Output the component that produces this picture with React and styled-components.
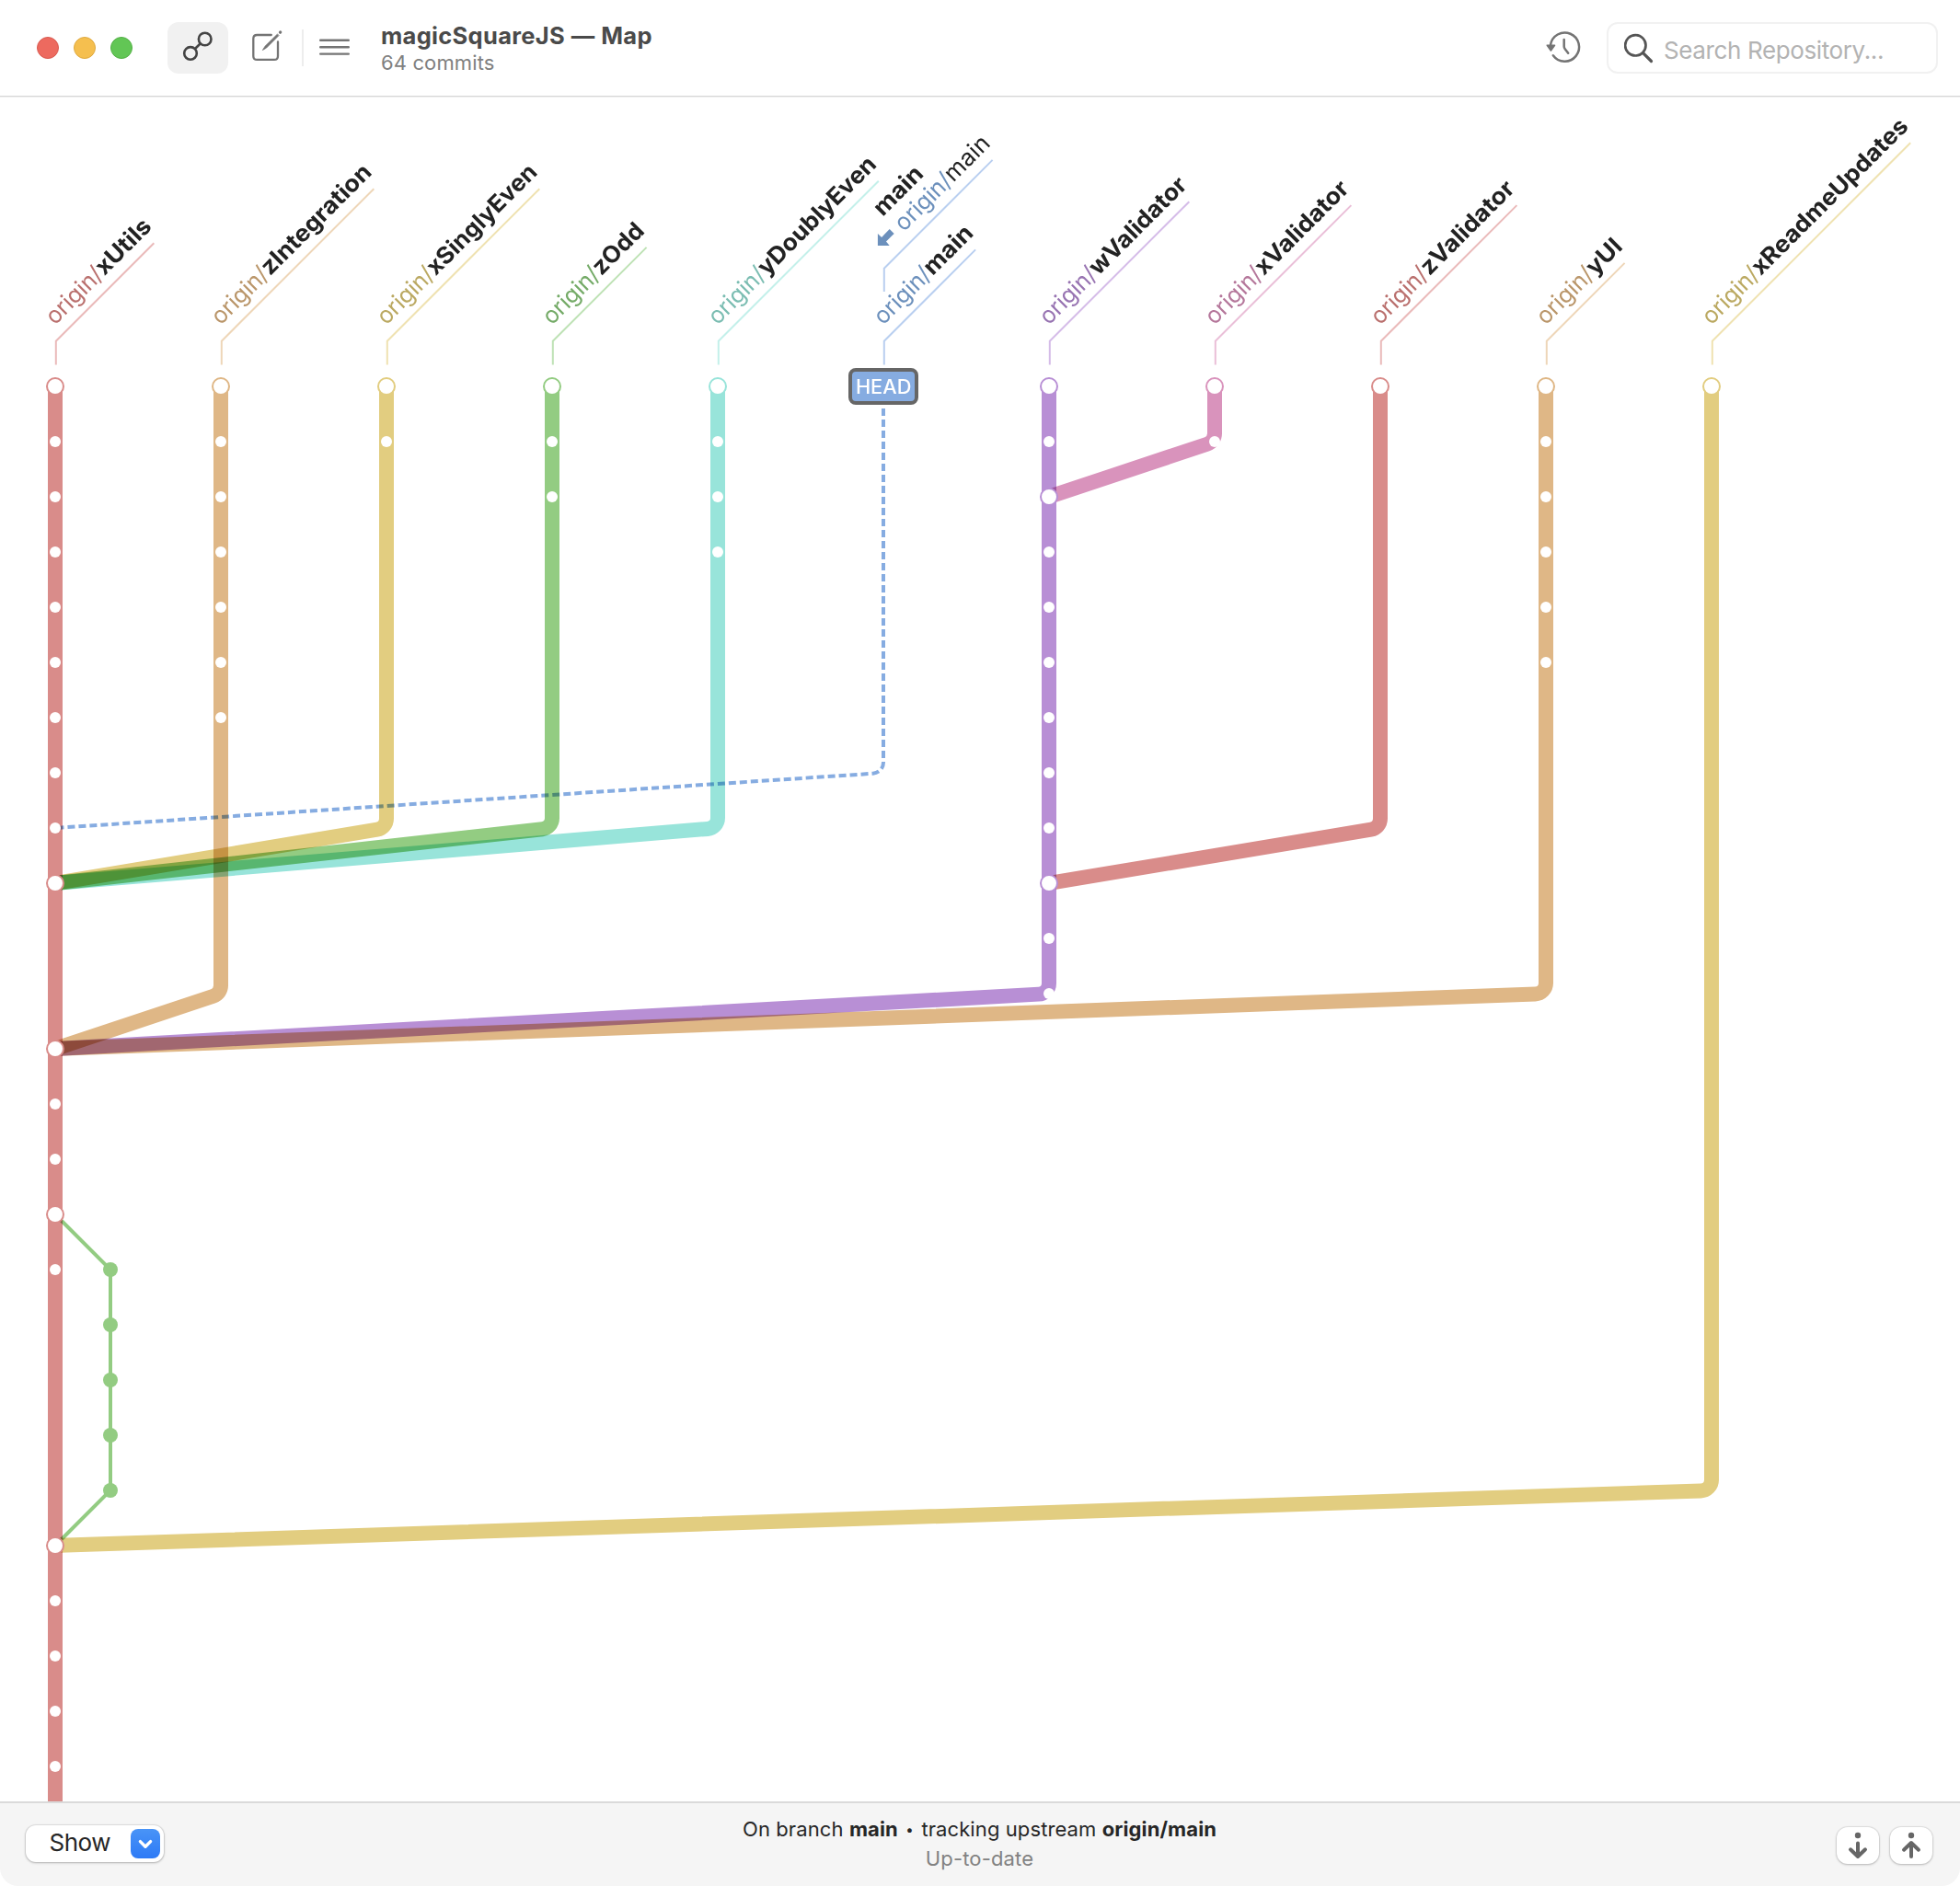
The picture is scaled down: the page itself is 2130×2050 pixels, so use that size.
import React from 'react';
import styled, { createGlobalStyle } from 'styled-components';

const GlobalStyle = createGlobalStyle`
  * { box-sizing: border-box; }
  body { margin: 0; background: #fff; }
`;

const FONT = 'Inter, "Liberation Sans", sans-serif';

const palette = {
  red: { line: '#d98c8a', text: '#ba706e', leader: '#eababa' },
  orange: { line: '#dfb786', text: '#ba966a', leader: '#eed6b8' },
  yellow: { line: '#e2cd80', text: '#bba962', leader: '#efe2b1' },
  green: { line: '#93cc82', text: '#75ab68', leader: '#bee2b5' },
  teal: { line: '#98e4da', text: '#7bbdb2', leader: '#c3f0ea' },
  blue: { line: '#86ace1', text: '#6c90bc', leader: '#b9cff0' },
  purple: { line: '#b88fd5', text: '#9874b2', leader: '#d5bce8' },
  pink: { line: '#d993bc', text: '#b5779b', leader: '#eabfd8' },
};

/* ---------- window chrome ---------- */

const Window = styled.div`
  width: 2130px;
  height: 2050px;
  display: flex;
  flex-direction: column;
  overflow: hidden;
  background: #fff;
  border-radius: 0 0 20px 20px;
  font-family: ${FONT};
`;

const Toolbar = styled.header`
  height: 106px;
  flex: none;
  display: flex;
  align-items: flex-start;
  padding: 24px 24px 0 40px;
  border-bottom: 1px solid #efefef;
  box-shadow: inset 0 -1px #d6d6d6;
`;

const TrafficLights = styled.div`
  display: flex;
  gap: 16px;
  height: 56px;
  align-items: center;
  margin-right: 38px;
`;

const Light = styled.span`
  width: 24px;
  height: 24px;
  border-radius: 50%;
  background: ${(p) => p.$fill};
  border: 1px solid ${(p) => p.$rim};
`;

const ToolButton = styled.button`
  width: ${(p) => p.$width || 66}px;
  height: 56px;
  padding: 0;
  border: 0;
  border-radius: 12px;
  background: ${(p) => (p.$active ? '#f1f1f1' : 'transparent')};
  color: ${(p) => (p.$active ? '#444' : '#747474')};
  display: flex;
  align-items: center;
  justify-content: center;
`;

const Divider = styled.span`
  width: 2px;
  height: 40px;
  margin: 8px 0 0 6px;
  background: #ededed;
`;

const Titles = styled.div`
  flex: 1;
  margin-left: 16px;
`;

const Title = styled.h1`
  margin: 0;
  font-size: 25.5px;
  line-height: 30px;
  font-weight: 700;
  letter-spacing: 0.3px;
  word-spacing: 0.4px;
  color: #4a4a4a;
`;

const Subtitle = styled.p`
  margin: 1px 0 0;
  font-size: 22px;
  line-height: 26px;
  letter-spacing: 0.12px;
  color: #808080;
`;

const SearchField = styled.label`
  width: 360px;
  height: 56px;
  margin-left: 13px;
  padding-left: 17px;
  border: 2px solid #f1f1f1;
  border-radius: 12px;
  display: flex;
  align-items: center;
  gap: 9px;
`;

const Placeholder = styled.span`
  padding-top: 6px;
  font-size: 26px;
  line-height: 32px;
  letter-spacing: -0.38px;
  color: #b3b3b3;
`;

const StatusBar = styled.footer`
  height: 92px;
  flex: none;
  display: grid;
  grid-template-columns: 1fr auto 1fr;
  align-items: start;
  padding: 24px 30px 0 28px;
  background: #f5f5f5;
  border-top: 2px solid #dadada;
`;

const PopUp = styled.button`
  width: 150px;
  height: 40px;
  padding: 0 4px 0 25.5px;
  border: 0;
  border-radius: 11px;
  background: #fff;
  box-shadow: 0 0 1px 1px rgba(0, 0, 0, 0.09), 0 1px 3px rgba(0, 0, 0, 0.22);
  display: flex;
  align-items: center;
  justify-content: space-between;
  font-family: ${FONT};
  font-size: 26px;
  letter-spacing: -0.5px;
  color: #262626;
`;

const PopUpLabel = styled.span`
  padding-bottom: 3px;
`;

const PopUpArrow = styled.span`
  width: 32px;
  height: 32px;
  border-radius: 8px;
  background: linear-gradient(#4994f7, #2d7af6);
  display: flex;
`;

const Status = styled.div`
  margin-top: -10px;
  padding-left: 1px;
  text-align: center;
`;

const StatusLine = styled.p`
  margin: 0;
  font-size: 22px;
  line-height: 28px;
  letter-spacing: ${(p) => (p.$muted ? 0.15 : 0.1)}px;
  color: ${(p) => (p.$muted ? '#828282' : '#262626')};
  & + & { margin-top: 4px; }
`;

const Bullet = styled.span`
  display: inline-block;
  width: 13px;
  font-size: 15px;
  line-height: 15px;
  vertical-align: 2px;
  text-align: center;
`;

const SyncButtons = styled.div`
  display: flex;
  justify-content: flex-end;
  gap: 12px;
  margin-top: 2px;
`;

const SyncButton = styled.button`
  width: 46px;
  height: 40px;
  padding: 0;
  border: 0;
  border-radius: 12px;
  background: #fff;
  color: #666;
  box-shadow: 0 0 1px 1px rgba(0, 0, 0, 0.08), 0 1px 3px rgba(0, 0, 0, 0.2);
  display: flex;
`;

const Icon = styled.svg`
  display: block;
  flex: none;
  fill: none;
  stroke: currentColor;
  stroke-width: ${(p) => p.$weight || 2.4};
  stroke-linecap: round;
  stroke-linejoin: round;
  color: ${(p) => p.$color || 'inherit'};
`;

/* ---------- commit map ---------- */

const MapCanvas = styled.svg`
  display: block;
  flex: none;
  width: 2130px;
  height: 1852px;
  background: #fff;
  isolation: isolate;
`;

const Track = styled.path`
  fill: none;
  stroke: ${(p) => palette[p.$hue].line};
  stroke-width: ${(p) => p.$weight || 16};
  stroke-dasharray: ${(p) => (p.$dashed ? '8 4' : 'none')};
  mix-blend-mode: multiply;
`;

const Stop = styled.circle`
  fill: #fff;
`;

const Junction = styled.circle`
  fill: #fff;
  stroke: ${(p) => palette[p.$hue].line};
  stroke-width: 2;
`;

const SideStop = styled.circle`
  fill: ${palette.green.line};
`;

const Leader = styled.path`
  fill: none;
  stroke: ${(p) => palette[p.$hue].leader};
  stroke-width: 2;
`;

const Remote = styled.text`
  font: 400 25.5px ${FONT};
  fill: ${(p) => palette[p.$hue].text};
`;

const Branch = styled.text`
  font: ${(p) => (p.$plain ? 400 : 700)} 25.5px ${FONT};
  fill: #222;
`;

const HeadBox = styled.rect`
  fill: ${palette.blue.line};
  stroke: #666;
  stroke-width: 4;
`;

const HeadText = styled.text`
  font: 500 21.5px ${FONT};
  fill: #fff;
`;

const row = (n) => 420 + n * 60;
const range = (a, b) => Array.from({ length: b - a + 1 }, (_, i) => a + i);

// Column lines: `knee` is the row of the bend, `into` the x,row it merges at.
const tracks = [
  { x: 60, hue: 'red', stops: [1, 2, 3, 4, 5, 6, 7, 8, 13, 14, 16, 22, 23, 24, 25], junctions: [0, 9, 12, 15, 21] },
  { x: 240, hue: 'orange', knee: 11, into: [60, 12], stops: range(1, 6), junctions: [0] },
  { x: 420, hue: 'yellow', knee: 8, into: [60, 9], stops: [1], junctions: [0] },
  { x: 600, hue: 'green', knee: 8, into: [60, 9], stops: [1, 2], junctions: [0] },
  { x: 780, hue: 'teal', knee: 8, into: [60, 9], stops: [1, 2, 3], junctions: [0] },
  { x: 960, hue: 'blue', knee: 7, into: [60, 8], stops: [], junctions: [], dashed: true },
  { x: 1140, hue: 'purple', knee: 11, into: [60, 12], stops: [1, 3, 4, 5, 6, 7, 8, 10, 11], junctions: [0, 2, 9] },
  { x: 1320, hue: 'pink', knee: 1, into: [1140, 2], stops: [1], junctions: [0] },
  { x: 1500, hue: 'red', knee: 8, into: [1140, 9], stops: [], junctions: [0] },
  { x: 1680, hue: 'orange', knee: 11, into: [60, 12], stops: range(1, 5), junctions: [0] },
  { x: 1860, hue: 'yellow', knee: 20, into: [60, 21], stops: [], junctions: [0] },
];

const labels = [
  { x: 60, hue: 'red', name: 'xUtils', run: 106.5 },
  { x: 240, hue: 'orange', name: 'zIntegration', run: 165.5 },
  { x: 420, hue: 'yellow', name: 'xSinglyEven', run: 165.5 },
  { x: 600, hue: 'green', name: 'zOdd', run: 101.8 },
  { x: 780, hue: 'teal', name: 'yDoublyEven', run: 174 },
  { x: 960, hue: 'blue', name: 'main', run: 99.3 },
  { x: 1140, hue: 'purple', name: 'wValidator', run: 151.5 },
  { x: 1320, hue: 'pink', name: 'xValidator', run: 147.6 },
  { x: 1500, hue: 'red', name: 'zValidator', run: 147.6 },
  { x: 1680, hue: 'orange', name: 'yUI', run: 84.8 },
  { x: 1860, hue: 'yellow', name: 'xReadmeUpdates', run: 215.4 },
];

const REMOTE_WIDTH = 76;

function trackPath({ x, knee, into, dashed }) {
  if (knee === undefined) return `M${x} 420V1970`;
  const ky = row(knee);
  const dx = into[0] - x;
  const dy = row(into[1]) - ky;
  const len = Math.hypot(dx, dy);
  const ux = dx / len;
  const uy = dy / len;
  const radius = 12;
  const t = radius * Math.tan(Math.acos(uy) / 2);
  const end = 5;
  return [
    `M${x} ${dashed ? 444 : 420}`,
    `V${ky - t}`,
    `A${radius} ${radius} 0 0 1 ${x + ux * t} ${ky + uy * t}`,
    `L${into[0] - ux * end} ${row(into[1]) - uy * end}`,
  ].join('');
}

function BranchLabel({ x, hue, name, run }) {
  const width = run * Math.SQRT2;
  return (
    <g>
      <Leader $hue={hue} d={`M${x + 0.8} 396.5V370.7l${run} ${-run}`} />
      <g transform={`translate(${x + 0.8} 370.7) rotate(-45)`}>
        <Remote $hue={hue} x="11" y="-12.5" textLength={REMOTE_WIDTH} lengthAdjust="spacingAndGlyphs">origin/</Remote>
        <Branch x={11 + REMOTE_WIDTH} y="-12.5" textLength={width - REMOTE_WIDTH} lengthAdjust="spacingAndGlyphs">{name}</Branch>
      </g>
    </g>
  );
}

function TrackingLabel() {
  return (
    <g>
      <Leader $hue="blue" d="M960.8 317V291.7l117.8 -117.8" />
      <g transform="translate(960.8 291.7) rotate(-45)">
        <Branch x="38.3" y="-40.5" textLength="64.5" lengthAdjust="spacingAndGlyphs">main</Branch>
        <Remote $hue="blue" x="43" y="-12.5" textLength={REMOTE_WIDTH} lengthAdjust="spacingAndGlyphs">origin/</Remote>
        <Branch $plain x="119" y="-12.5" textLength="58.5" lengthAdjust="spacingAndGlyphs">main</Branch>
      </g>
      <path
        fill={palette.blue.text}
        d="M953.9 254l4.2 3.9 8.6-8.9 5 4.9-8.7 8.7 3.7 4.4h-12.8z"
      />
    </g>
  );
}

function CommitMap() {
  return (
    <MapCanvas viewBox="0 106 2130 1852">
      {tracks.map((t) => (
        <Track key={t.x} $hue={t.hue} $dashed={t.dashed} $weight={t.dashed ? 4 : 16} d={trackPath(t)} />
      ))}
      <Track $hue="green" $weight={4} d="M65 1325L120 1380V1620L65 1675" />
      {range(16, 20).map((n) => <SideStop key={n} cx={120} cy={row(n)} r={8} />)}
      {tracks.map((t) => (
        <g key={t.x}>
          {t.stops.map((n) => <Stop key={n} cx={t.x} cy={row(n)} r={6} />)}
          {t.junctions.map((n) => <Junction key={n} $hue={t.hue} cx={t.x} cy={row(n)} r={9} />)}
        </g>
      ))}
      {labels.map((l) => <BranchLabel key={l.x} {...l} />)}
      <TrackingLabel />
      <HeadBox x="924" y="402" width="72" height="36" rx="6" />
      <HeadText x="929.9" y="428" textLength="60.5" lengthAdjust="spacingAndGlyphs">HEAD</HeadText>
    </MapCanvas>
  );
}

function SyncIcon({ up }) {
  return (
    <Icon width="46" height="40" viewBox="0 0 46 40" $weight={4}>
      <circle cx="23" cy="9" r="3.2" fill="currentColor" stroke="none" />
      <path d={up ? 'M23 32V17.5M15 24.7L23 17l8 7.7' : 'M23 17.5V32M15 24.3L23 32l8-7.7'} />
    </Icon>
  );
}

export default function App() {
  return (
    <Window>
      <GlobalStyle />
      <Toolbar>
        <TrafficLights>
          <Light $fill="#ed6a5f" $rim="#d95b51" />
          <Light $fill="#f5bf4f" $rim="#dfaa41" />
          <Light $fill="#62c655" $rim="#53b046" />
        </TrafficLights>
        <ToolButton $active aria-label="Map">
          <Icon width="66" height="56" viewBox="182 24 66 56" $weight={2.6}>
            <circle cx="222.7" cy="42.5" r="6.8" />
            <circle cx="207" cy="57.9" r="6.8" />
            <path d="M212.2 52.8l5.4-5.3" />
          </Icon>
        </ToolButton>
        <ToolButton $width={74} aria-label="Compose">
          <Icon width="74" height="56" viewBox="248 24 74 56" $weight={2.3}>
            <path d="M294.8 38h-15.5q-4 0-4 4v18.9q0 4 4 4h18.7q4 0 4-4V45.5" />
            <path d="M304.5 35.2l.2-.2" strokeWidth="3.2" />
            <path d="M301.3 37.2L288 50.3l-2.6 4.2 4.2-2.5 13.2-13.2z" fill="currentColor" strokeWidth="0.8" />
          </Icon>
        </ToolButton>
        <Divider />
        <ToolButton $width={68} aria-label="Menu">
          <Icon width="68" height="56" viewBox="330 24 68 56">
            <path d="M348.2 43.7h30.6M348.2 51.2h30.6M348.2 58.6h30.6" />
          </Icon>
        </ToolButton>
        <Titles>
          <Title>magicSquareJS — Map</Title>
          <Subtitle>64 commits</Subtitle>
        </Titles>
        <ToolButton aria-label="History">
          <Icon width="66" height="56" viewBox="1667 24 66 56" $weight={2.5}>
            <path d="M1685 49a15.6 15.6 0 1 1 2.8 11.2" />
            <path d="M1681.3 49.2h8.2l-4.1 5.8z" fill="currentColor" strokeWidth="1.6" />
            <path d="M1699.7 43v7.2q0 1.8 1 3l3.5 4.6" />
          </Icon>
        </ToolButton>
        <SearchField>
          <Icon width="34" height="34" viewBox="1765 35 34 34" $weight={2.7} $color="#555">
            <circle cx="1777.3" cy="49.3" r="11.2" />
            <path d="M1785.6 57.6l8.9 8.9" strokeWidth="3.2" />
          </Icon>
          <Placeholder>Search Repository...</Placeholder>
        </SearchField>
      </Toolbar>

      <CommitMap />

      <StatusBar>
        <PopUp>
          <PopUpLabel>Show</PopUpLabel>
          <PopUpArrow>
            <Icon width="32" height="32" viewBox="0 0 32 32" $weight={3.4} $color="#fff">
              <path d="M10.4 13.6l5.6 5.7 5.6-5.7" />
            </Icon>
          </PopUpArrow>
        </PopUp>
        <Status>
          <StatusLine>On branch <b>main</b> <Bullet>•</Bullet> tracking upstream <b>origin/main</b></StatusLine>
          <StatusLine $muted>Up-to-date</StatusLine>
        </Status>
        <SyncButtons>
          <SyncButton aria-label="Pull"><SyncIcon /></SyncButton>
          <SyncButton aria-label="Push"><SyncIcon up /></SyncButton>
        </SyncButtons>
      </StatusBar>
    </Window>
  );
}
